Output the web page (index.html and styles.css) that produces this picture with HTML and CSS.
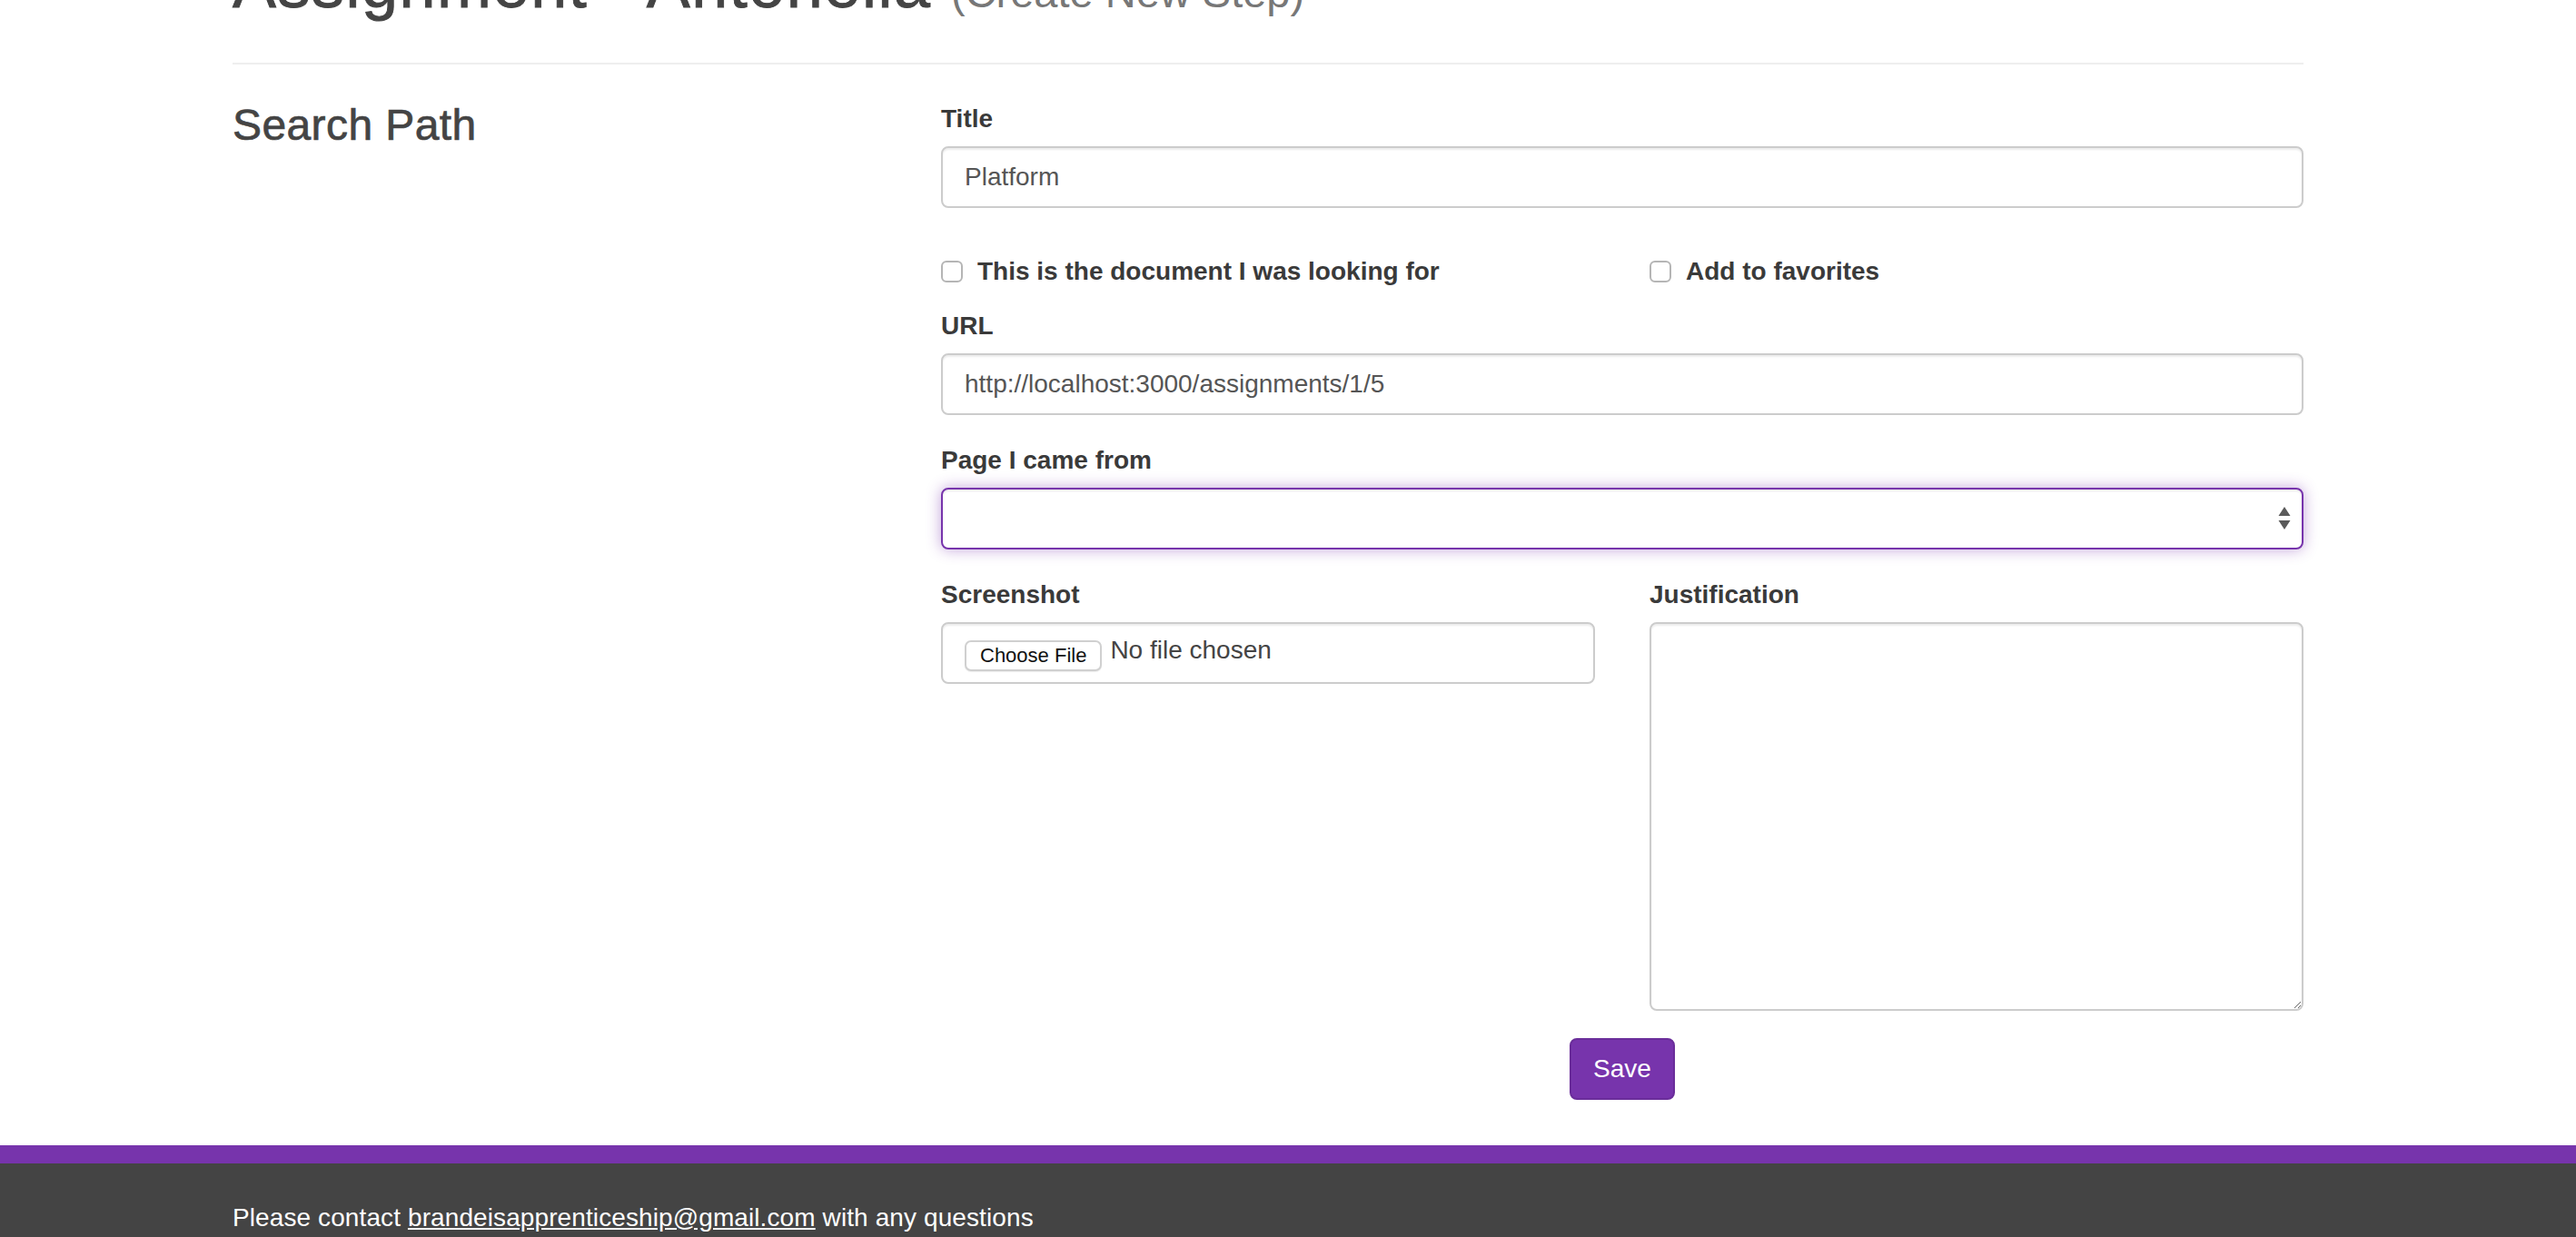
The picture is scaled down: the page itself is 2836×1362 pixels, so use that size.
FILE: index.html
```html
<!DOCTYPE html>
<html lang="en">
<head>
<meta charset="utf-8">
<title>Assignment - Antonella (Create New Step)</title>
<link rel="stylesheet" href="styles.css">
</head>
<body>
<div class="page">
  <div class="container">
    <div class="page-header">
      <h1>Assignment - Antonella <small>(Create New Step)</small></h1>
    </div>
    <div class="main-row">
      <div class="side">
        <h3>Search Path</h3>
      </div>
      <form class="step-form">
        <div class="form-group">
          <label class="control-label" for="title">Title</label>
          <input class="form-control" id="title" type="text" value="Platform">
        </div>
        <div class="half-row">
          <div class="checkbox">
            <label><input type="checkbox" class="check"> This is the document I was looking for</label>
          </div>
          <div class="checkbox">
            <label><input type="checkbox" class="check"> Add to favorites</label>
          </div>
        </div>
        <div class="form-group">
          <label class="control-label" for="url">URL</label>
          <input class="form-control" id="url" type="text" value="http://localhost:3000/assignments/1/5">
        </div>
        <div class="form-group">
          <label class="control-label" for="from">Page I came from</label>
          <div class="select-wrap">
            <select class="form-control select focused" id="from"><option></option></select>
            <svg class="select-arrows" width="14" height="26" viewBox="0 0 14 26" aria-hidden="true">
              <polygon points="7,0 13.5,10 0.5,10" fill="#5a5a5a"/>
              <polygon points="0.5,15 13.5,15 7,25" fill="#5a5a5a"/>
            </svg>
          </div>
        </div>
        <div class="half-row">
          <div class="form-group">
            <label class="control-label">Screenshot</label>
            <div class="form-control file-control">
              <span class="file-btn">Choose File</span>
              <span class="file-text">No file chosen</span>
            </div>
          </div>
          <div class="form-group">
            <label class="control-label" for="just">Justification</label>
            <textarea class="form-control textarea" id="just"></textarea>
          </div>
        </div>
        <div class="actions">
          <button type="button" class="btn-save">Save</button>
        </div>
      </form>
    </div>
  </div>
  <footer class="footer">
    <div class="footer-inner">Please contact <a href="#" class="footer-link">brandeisapprenticeship@gmail.com</a> with any questions</div>
  </footer>
</div>
</body>
</html>
```

FILE: styles.css
```css
* { box-sizing: border-box; }

html, body {
  margin: 0;
  padding: 0;
  background: #fff;
}

body {
  font-family: "Liberation Sans", Arial, Helvetica, sans-serif;
  font-size: 28px;
  line-height: 40px;
  color: #333;
  overflow: hidden;
  height: 1362px;
}

.page {
  min-height: 1362px;
  display: flex;
  flex-direction: column;
}

.container {
  width: 2340px;
  margin-left: 226px;
  padding: 0 30px 50px;
}

.page-header {
  margin: -56px 0 40px;
  padding-bottom: 18px;
  border-bottom: 2px solid #eee;
}

.page-header h1 {
  margin: 0 0 20px;
  font-size: 72px;
  line-height: 79px;
  font-weight: 400;
  color: #444;
  letter-spacing: 1.5px;
  -webkit-text-stroke: 0.9px #444;
}

.page-header h1 small {
  font-size: 47px;
  color: #777;
  font-weight: 400;
  letter-spacing: 0;
  -webkit-text-stroke: 0;
}

.main-row {
  display: grid;
  grid-template-columns: 720px 1500px;
  column-gap: 60px;
}

.side h3 {
  margin: 3px 0 0;
  font-size: 48px;
  line-height: 48px;
  font-weight: 400;
  color: #444;
  letter-spacing: 0.4px;
  -webkit-text-stroke: 0.7px #444;
}

.step-form {
  display: flex;
  flex-direction: column;
}

.form-group {
  margin-bottom: 30px;
}

.control-label {
  display: block;
  font-weight: 700;
  margin-bottom: 10px;
  color: #3a3a3a;
}

.form-control {
  display: block;
  width: 100%;
  height: 68px;
  padding: 12px 24px;
  font-family: "Liberation Sans", Arial, Helvetica, sans-serif;
  font-size: 28px;
  line-height: 40px;
  color: #555;
  background: #fff;
  border: 2px solid #ccc;
  border-radius: 8px;
  box-shadow: inset 0 2px 2px rgba(0, 0, 0, 0.075);
  outline: none;
}

.half-row {
  display: grid;
  grid-template-columns: 720px 720px;
  column-gap: 60px;
}

.checkbox {
  margin: 20px 0;
}

.checkbox label {
  display: flex;
  align-items: center;
  gap: 16px;
  font-weight: 700;
  color: #3a3a3a;
}

.check {
  appearance: none;
  -webkit-appearance: none;
  width: 24px;
  height: 24px;
  margin: 0;
  border: 2px solid #b5b5b5;
  border-radius: 6px;
  background: #fff;
  flex: none;
}

.select-wrap {
  position: relative;
}

.select {
  appearance: none;
  -webkit-appearance: none;
}

.select.focused {
  border-color: #7734ac;
  box-shadow: inset 0 2px 2px rgba(0, 0, 0, 0.075), 0 0 16px rgba(119, 52, 172, 0.45);
}

.select-arrows {
  position: absolute;
  right: 14px;
  top: 21px;
}

.file-control {
  display: flex;
  align-items: center;
  gap: 9px;
  padding-top: 0;
  padding-bottom: 0;
}

.file-btn {
  display: inline-block;
  height: 34px;
  margin-top: 6px;
  padding: 0 15px;
  font-size: 22px;
  line-height: 30px;
  color: #111;
  background: #fff;
  border: 2px solid #d0d0d0;
  border-radius: 7px;
  box-shadow: 0 1px 1px rgba(0, 0, 0, 0.08);
}

.file-text {
  color: #444;
  margin-top: -6px;
}

.textarea {
  height: 428px;
  resize: vertical;
}

.actions {
  display: flex;
  justify-content: center;
}

.btn-save {
  height: 68px;
  padding: 12px 24px;
  font-family: "Liberation Sans", Arial, Helvetica, sans-serif;
  font-size: 28px;
  line-height: 40px;
  color: #fff;
  background: #7734ac;
  border: 2px solid #6a2d9a;
  border-radius: 8px;
}

.footer {
  margin-top: auto;
  flex: 1;
  background: #444;
  border-top: 20px solid #7734ac;
  padding-top: 40px;
  color: #fff;
}

.footer-inner {
  width: 2280px;
  margin-left: 256px;
  letter-spacing: 0.1px;
}

.footer-link {
  color: #fff;
  text-decoration: underline;
}
```
